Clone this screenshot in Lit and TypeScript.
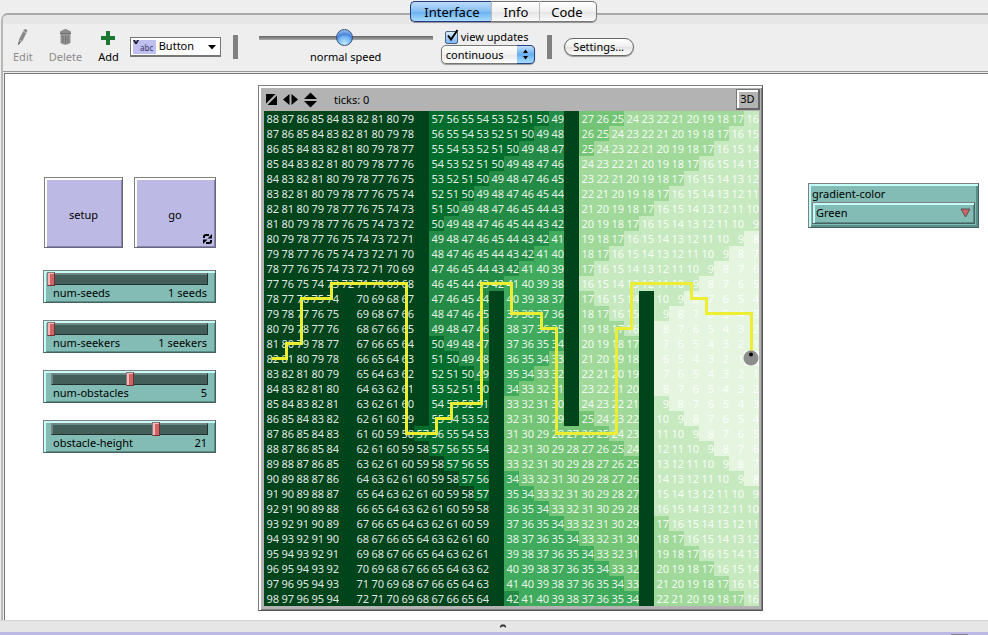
import { LitElement, html, css, svg } from "lit";
import { customElement, property } from "lit/decorators.js";
import { styleMap } from "lit/directives/style-map.js";

const SIZE = 33;
const PATCH = 15;

/** Obstacle columns, each with its first and last blocked row. */
const WALLS: Array<[number, number, number]> = [
  [5, 12, 32],
  [10, 0, 20],
  [15, 12, 32],
  [20, 0, 20],
  [25, 12, 32],
];
const SEED: [number, number] = [32, 16];

/** Corners of the seeker's trail, in patch coordinates. */
const TRAIL: Array<[number, number]> = [
  [0, 16], [1, 16], [1, 15], [2, 15], [2, 12], [4, 12], [4, 11], [9, 11],
  [9, 21], [11, 21], [11, 20], [12, 20], [12, 19], [14, 19], [14, 11],
  [16, 11], [16, 13], [18, 13], [18, 14], [19, 14], [19, 21], [23, 21],
  [23, 14], [24, 14], [24, 11], [28, 11], [28, 12], [29, 12], [29, 13],
  [32, 13], [32, 16],
];

const SHADES: Array<[number, string]> = [
  [0, "#f7fcf5"],
  [8, "#e5f5e0"],
  [16, "#c7e9c0"],
  [24, "#a1d99b"],
  [33, "#74c476"],
  [41, "#41ab5d"],
  [49, "#238b45"],
  [57, "#006d2c"],
  [Infinity, "#00441b"],
];

function isWall(col: number, row: number): boolean {
  return WALLS.some(([c, from, to]) => c === col && row >= from && row <= to);
}

/** Breadth-first walk from the seed; walls keep the value -1. */
function distances(): number[] {
  const dist = new Array<number>(SIZE * SIZE).fill(-1);
  dist[SEED[1] * SIZE + SEED[0]] = 0;
  const queue: Array<[number, number]> = [SEED];
  for (let i = 0; i < queue.length; i++) {
    const [c, r] = queue[i];
    const next = dist[r * SIZE + c] + 1;
    for (const [dc, dr] of [[1, 0], [-1, 0], [0, 1], [0, -1]]) {
      const nc = c + dc;
      const nr = r + dr;
      if (nc < 0 || nr < 0 || nc >= SIZE || nr >= SIZE) continue;
      if (isWall(nc, nr) || dist[nr * SIZE + nc] >= 0) continue;
      dist[nr * SIZE + nc] = next;
      queue.push([nc, nr]);
    }
  }
  return dist;
}

function shade(d: number): string {
  if (d < 0) return "#00441b";
  return SHADES.find(([max]) => d <= max)![1];
}

@customElement("world-view")
export class WorldView extends LitElement {
  static styles = css`
    :host {
      display: block;
      box-sizing: border-box;
      border: 1px solid #808080;
      border-right-color: #555;
      border-bottom-color: #555;
      background: #b3b3b3;
      box-shadow: inset 2px 2px #fff, inset -1px -1px #808080;
      padding: 2px 2px 4px 5px;
    }
    .bar {
      display: flex;
      align-items: center;
      height: 23px;
      padding: 0 0 0 1px;
      gap: 4px;
    }
    .icon {
      display: block;
    }
    .ticks {
      margin-left: 12px;
      flex: 1;
    }
    button {
      font: inherit;
      width: 24px;
      height: 21px;
      padding: 0;
      color: #000;
      background: #b3b3b3;
      border: 1px solid #777;
      border-right: 2px solid #666;
      border-bottom: 2px solid #666;
      box-shadow: inset 2px 2px #fff;
    }
    .world {
      position: relative;
      width: max-content;
    }
    .patches {
      display: grid;
      grid-template-columns: repeat(33, 15px);
      grid-auto-rows: 15px;
      font-size: 11px;
      line-height: 15px;
      text-align: right;
      color: rgba(255, 255, 255, 0.9);
      white-space: nowrap;
      overflow: hidden;
    }
    .overlay {
      position: absolute;
      inset: 0;
      width: 100%;
      height: 100%;
    }
  `;

  private field = distances();

  render() {
    const centre = (n: number) => (n + 0.5) * PATCH;
    const points = TRAIL.map(([c, r]) => `${centre(c)},${centre(r)}`).join(" ");
    return html`
      <div class="bar">
        <svg class="icon" width="13" height="13" viewBox="0 0 13 13">
          <path d="M1 1h9.5L1 10.500z M12 2.500V12H2.500z" />
        </svg>
        <svg class="icon" width="17" height="13" viewBox="0 0 17 13">
          <path d="M7.500 1v11L1 6.500z M9.500 1v11L16 6.500z" />
        </svg>
        <svg class="icon" width="15" height="16" viewBox="0 0 15 16">
          <path d="M1 7L7.500 0.500L14 7z M1 9L7.500 15.500L14 9z" />
        </svg>
        <span class="ticks">ticks: 0</span>
        <button type="button">3D</button>
      </div>
      <div class="world">
        <div class="patches">
          ${this.field.map(
            (d) => html`<span style=${styleMap({ background: shade(d) })}>${d > 0 ? d : ""}</span>`
          )}
        </div>
        <svg class="overlay" viewBox="0 0 495 495">
          ${svg`<polyline points=${points} fill="none" stroke="#eded31" stroke-width="3" />
          <circle cx="487" cy="247" r="7.500" fill="#8d8d8d" />
          <circle cx="487" cy="243.500" r="2" fill="#000" />`}
        </svg>
      </div>
    `;
  }
}

@customElement("model-slider")
export class ModelSlider extends LitElement {
  @property() name = "";
  @property() units = "";
  @property({ type: Number }) min = 0;
  @property({ type: Number }) max = 10;
  @property({ type: Number }) value = 0;

  static styles = css`
    :host {
      display: block;
      box-sizing: border-box;
      height: 33px;
      border: 1px solid #808080;
      border-right-color: #46615e;
      border-bottom-color: #46615e;
      background: #82bcb5;
      box-shadow: inset 2px 2px #c4fffa, inset -1px -1px #5a8f89;
      padding: 2px 7px 0 7px;
    }
    .track {
      height: 12px;
      box-sizing: border-box;
      background: #445e5a;
      border: 1px solid #808080;
      border-right-color: #22312f;
      border-bottom-color: #22312f;
      box-shadow: inset 1px 1px #5f8a85;
    }
    input {
      -webkit-appearance: none;
      appearance: none;
      display: block;
      width: calc(100% + 10px);
      height: 14px;
      margin: -2px -5px;
      background: none;
    }
    input::-webkit-slider-thumb {
      -webkit-appearance: none;
      box-sizing: border-box;
      width: 8px;
      height: 14px;
      background: #cd6566;
      border: 1px solid #808080;
      border-right-color: #6e3233;
      border-bottom-color: #6e3233;
      box-shadow: inset 2px 1px #ffb3b3;
    }
    .caption {
      display: flex;
      justify-content: space-between;
      padding: 0 1px 0 2px;
      line-height: 16px;
    }
  `;

  render() {
    return html`
      <div class="track">
        <input id="range" type="range" min=${this.min} max=${this.max} .value=${String(this.value)} />
      </div>
      <div class="caption">
        <label for="range">${this.name}</label>
        <output for="range">${this.value} ${this.units}</output>
      </div>
    `;
  }
}

@customElement("app-root")
export class AppRoot extends LitElement {
  static styles = css`
    :host {
      display: flex;
      flex-direction: column;
      box-sizing: border-box;
      min-height: 100vh;
      background: #eee;
      color: #000;
      font: 11px/16px "Noto Sans", "Open Sans", sans-serif;
    }
    button,
    select {
      font: inherit;
      color: #000;
      margin: 0;
    }
    .tabs {
      display: flex;
      justify-content: center;
      position: relative;
      z-index: 1;
      padding: 1px 0 0 19px;
      height: 21px;
      margin-bottom: -9px;
    }
    .tab {
      box-sizing: border-box;
      height: 21px;
      padding: 0 11px;
      font-size: 13px;
      line-height: 18px;
      border: 1px solid #777;
      border-left-color: #bbb;
      border-right-width: 0;
      background: linear-gradient(#fff, #f0f0f0 50%, #e4e4e4 51%, #fafafa);
      box-shadow: 0 1px #999;
    }
    .tab:first-child {
      padding: 0 12px 0 13px;
      border-color: #23387f;
      border-radius: 5px 0 0 5px;
      background: linear-gradient(#bcdcfa, #84bdf2 50%, #66aef0 51%, #a9dcff);
    }
    .tab:last-child {
      padding: 0 13px 0 11px;
      border-right: 1px solid #777;
      border-radius: 0 5px 5px 0;
    }
    .pane {
      display: flex;
      flex-direction: column;
      flex: 1;
      margin-left: 1px;
      border: 2px solid #aaa;
      border-width: 2px 0 0 2px;
      border-color: #a8a8a8 #a8a8a8 #a8a8a8 #b8b8b8;
      border-radius: 7px 0 0 0;
    }
    .strip {
      height: 9px;
      background: #e6e6e6;
      border-radius: 5px 0 0 0;
    }
    .toolbar {
      display: flex;
      align-items: center;
      height: 45px;
      padding-bottom: 2px;
      border-bottom: 1px solid #999;
    }
    .tool {
      display: flex;
      flex-direction: column;
      align-items: center;
      border: 0;
      padding: 0;
      background: none;
      gap: 3px;
    }
    .tool[disabled] {
      color: #8c8c8c;
    }
    .edit {
      margin-left: 10px;
    }
    .delete,
    .add {
      margin-left: 16px;
    }
    .kind {
      display: flex;
      align-items: center;
      box-sizing: border-box;
      position: relative;
      width: 91px;
      height: 20px;
      margin-left: 11px;
      border: 1px solid #777;
      border-bottom-width: 2px;
      background: #fff;
    }
    .swatch {
      position: absolute;
      left: 2px;
      top: 2px;
      pointer-events: none;
    }
    .kind select {
      -webkit-appearance: none;
      appearance: none;
      width: 100%;
      border: 0;
      padding: 0 0 0 28px;
      background: none;
    }
    .arrow {
      position: absolute;
      right: 4px;
      top: 7px;
      pointer-events: none;
    }
    .divider {
      width: 5px;
      height: 24px;
      background: #808080;
    }
    .kind + .divider {
      margin-left: 12px;
    }
    .speed {
      display: flex;
      flex-direction: column;
      align-items: center;
      gap: 2px;
      width: 174px;
      margin-left: 21px;
    }
    .speed input {
      -webkit-appearance: none;
      appearance: none;
      width: 100%;
      height: 19px;
      margin: 0;
      background: linear-gradient(#666, #aaa) center / 100% 4px no-repeat;
    }
    .speed input::-webkit-slider-thumb {
      -webkit-appearance: none;
      box-sizing: border-box;
      width: 17px;
      height: 17px;
      border-radius: 50%;
      border: 1px solid #35507c;
      background: radial-gradient(circle at 50% 90%, #c4ecff, #70b2f2 45%, #4784da 60%, #c8def8);
    }
    .updates {
      display: flex;
      flex-direction: column;
      width: 94px;
      margin-left: 8px;
    }
    .check {
      display: flex;
      align-items: center;
      gap: 3px;
      padding-left: 4px;
      position: relative;
    }
    .check input {
      -webkit-appearance: none;
      appearance: none;
      width: 13px;
      height: 13px;
      margin: 0;
      border: 1px solid #4b6286;
      border-radius: 2px;
      background: linear-gradient(#d9ebfd, #7ab8f5);
    }
    .tick {
      position: absolute;
      left: 5px;
      top: 0;
      pointer-events: none;
    }
    .popup {
      position: relative;
    }
    .popup select {
      -webkit-appearance: none;
      appearance: none;
      display: block;
      width: 100%;
      height: 19px;
      padding: 0 0 0 4px;
      line-height: 16px;
      border: 1px solid #777;
      border-radius: 5px;
      background: linear-gradient(#fff, #f1f1f1 50%, #e8e8e8 51%, #fff);
      box-shadow: 0 1px 1px #999;
    }
    .stepper {
      position: absolute;
      right: 0;
      top: 0;
      pointer-events: none;
    }
    .updates + .divider {
      margin-left: 12px;
    }
    .settings {
      box-sizing: border-box;
      height: 18px;
      padding: 0 8px;
      margin-left: 12px;
      width: 70px;
      white-space: nowrap;
      line-height: 14px;
      border: 1px solid #666;
      border-radius: 9px;
      background: linear-gradient(#fff, #efefef 50%, #e2e2e2 51%, #fff);
      box-shadow: 0 1px 1px #999;
    }
    .canvas {
      display: flex;
      align-items: flex-start;
      flex: 1;
      margin: 1px 0 0 1px;
      border-top: 1px solid #777;
      border-left: 1px solid #777;
      background: #fff;
      padding: 11px 9px 9px 38px;
    }
    .controls {
      display: flex;
      flex-direction: column;
      gap: 17px;
      width: 173px;
      margin-top: 92px;
    }
    .actions {
      display: flex;
      justify-content: space-between;
      padding-left: 1px;
      margin-bottom: 5px;
    }
    .action {
      position: relative;
      width: 79px;
      height: 71px;
      padding: 4px 0 0 0;
      border: 1px solid #808080;
      border-right-color: #67657f;
      border-bottom-color: #67657f;
      background: #bcbae5;
      box-shadow: inset 2px 2px #fff, inset -1px -1px #8684a8;
    }
    .forever {
      width: 82px;
    }
    .loop {
      position: absolute;
      right: 3px;
      bottom: 3px;
    }
    world-view {
      margin-left: 42px;
      width: 505px;
    }
    .chooser {
      box-sizing: border-box;
      width: 171px;
      height: 45px;
      margin: 98px 0 0 auto;
      padding: 2px 3px 0 3px;
      border: 1px solid #808080;
      border-right-color: #46615e;
      border-bottom-color: #46615e;
      background: #82bcb5;
      box-shadow: inset 2px 2px #c4fffa, inset -2px -2px #5a8f89;
    }
    .chooser label {
      display: block;
      line-height: 16px;
    }
    .chooser .pick {
      position: relative;
    }
    .chooser select {
      -webkit-appearance: none;
      appearance: none;
      display: block;
      width: 163px;
      height: 22px;
      padding: 0 0 0 3px;
      border: 1px solid #808080;
      border-right-color: #46615e;
      border-bottom-color: #46615e;
      border-radius: 0;
      background: #82bcb5;
      box-shadow: inset 2px 2px #c4fffa, inset -1px -1px #5a8f89;
    }
    .mark {
      position: absolute;
      right: 4px;
      top: 6px;
      pointer-events: none;
    }
    .handle {
      height: 11px;
      border-top: 1px solid #d4d4d4;
      background: #e6e6e6;
      text-align: center;
      padding-left: 18px;
    }
    .caret {
      display: block;
      margin: 3px auto 0;
    }
    .command {
      display: flex;
      justify-content: flex-end;
      align-items: flex-end;
      height: 3px;
      padding-right: 20px;
      background: #bcbae5;
    }
    .edge {
      width: 17px;
      height: 1px;
      background: #808088;
    }
  `;

  render() {
    return html`
      <nav class="tabs">
        <button class="tab" type="button">Interface</button>
        <button class="tab" type="button">Info</button>
        <button class="tab" type="button">Code</button>
      </nav>
      <main class="pane">
        <div class="strip"></div>
        <div class="toolbar">
          <button class="tool edit" type="button" disabled>
            <svg width="12" height="18" viewBox="0 0 12 18">
              <path d="M1 17L2 11.500L7 1.500Q9 0 10.500 2.500L5.500 13z" fill="#8a8a8a" />
              <path d="M2.500 12L5 13.500M6 3L9.500 5" stroke="#c4c4c4" fill="none" />
              <path d="M1 17l.5-2.500 1.500 1z" fill="#555" />
            </svg>
            Edit
          </button>
          <button class="tool delete" type="button" disabled>
            <svg width="13" height="18" viewBox="0 0 13 18">
              <path d="M4 2Q6.500 0 9 2L12 3.500V6H1V3.500z" fill="#8c8c8c" />
              <path d="M1.500 6H11.500V15Q6.500 18.500 1.500 15z" fill="#929292" />
              <path d="M1 5.500H12M4 8V15M6.500 8V16M9 8V15" stroke="#707070" fill="none" />
            </svg>
            Delete
          </button>
          <button class="tool add" type="button">
            <svg width="14" height="18" viewBox="0 0 14 18">
              <path d="M5 3h4v5h5v4H9v5H5v-5H0V8h5z" fill="#1c7830" />
            </svg>
            Add
          </button>
          <div class="kind">
            <select aria-label="Widget type">
              <option>Button</option>
            </select>
            <svg class="swatch" width="23" height="14" viewBox="0 0 23 14">
              <rect width="23" height="14" fill="#bfbff0" />
              <path d="M0 0h2l1 2 1-2h2L4 4H2z" fill="#223" />
              <text x="7" y="11" font-size="8" fill="#336">abc</text>
            </svg>
            <svg class="arrow" width="8" height="5" viewBox="0 0 8 5">
              <path d="M0 0h8L4 4.500z" />
            </svg>
          </div>
          <div class="divider"></div>
          <div class="speed">
            <input id="speed" type="range" min="0" max="100" value="49" />
            <label for="speed">normal speed</label>
          </div>
          <div class="updates">
            <div class="check">
              <input id="updates" type="checkbox" checked />
              <label for="updates">view updates</label>
              <svg class="tick" width="13" height="13" viewBox="0 0 13 13">
                <path d="M2 6.500L5 10.500L11.500 1" stroke="#000" stroke-width="2" fill="none" />
              </svg>
            </div>
            <div class="popup">
              <select aria-label="Update mode">
                <option>continuous</option>
              </select>
              <svg class="stepper" width="18" height="19" viewBox="0 0 18 19">
                <defs>
                  <linearGradient id="aqua" x2="0" y2="1">
                    <stop offset="0" stop-color="#c9e2fb" />
                    <stop offset="0.500" stop-color="#68aff0" />
                    <stop offset="1" stop-color="#aee2ff" />
                  </linearGradient>
                </defs>
                <path d="M0 .5H13Q17.500 .5 17.500 5V14Q17.500 18.500 13 18.500H0z" fill="url(#aqua)" />
                <path d="M0 .5H13Q17.500 .5 17.500 5V14Q17.500 18.500 13 18.500H0" fill="none" stroke="#25408a" />
                <path d="M6 8L8.500 4.500L11 8z M6 11L8.500 14.500L11 11z" />
              </svg>
            </div>
          </div>
          <div class="divider"></div>
          <button class="settings" type="button">Settings...</button>
        </div>
        <div class="canvas">
          <div class="controls">
            <div class="actions">
              <button class="action" type="button">setup</button>
              <button class="action forever" type="button">
                go
                <svg class="loop" width="9" height="10" viewBox="0 0 9 10">
                  <path d="M1 4V2.500Q1 1 3 1H6M8 6V7.500Q8 9 6 9H3" fill="none" stroke="#000" stroke-width="2" />
                  <path d="M9 0V4.500H4.500z M0 10V5.500H4.500z" />
                </svg>
              </button>
            </div>
            <model-slider name="num-seeds" units="seeds" min="1" max="10" value="1"></model-slider>
            <model-slider name="num-seekers" units="seekers" min="1" max="10" value="1"></model-slider>
            <model-slider name="num-obstacles" min="0" max="10" value="5"></model-slider>
            <model-slider name="obstacle-height" min="1" max="31" value="21"></model-slider>
          </div>
          <world-view></world-view>
          <div class="chooser">
            <label for="gradient">gradient-color</label>
            <div class="pick">
              <select id="gradient">
                <option>Green</option>
              </select>
              <svg class="mark" width="11" height="10" viewBox="0 0 11 10">
                <path d="M1 1H10L5.500 9z" fill="#cd6566" stroke="#555" />
              </svg>
            </div>
          </div>
        </div>
      </main>
      <div class="handle">
        <svg class="caret" width="6" height="5" viewBox="0 0 6 5">
          <path d="M0 4V2L1.500 .5H4.500L6 2V4L4 2.500H2z" fill="#333" />
        </svg>
      </div>
      <div class="command"><div class="edge"></div></div>
    `;
  }
}
